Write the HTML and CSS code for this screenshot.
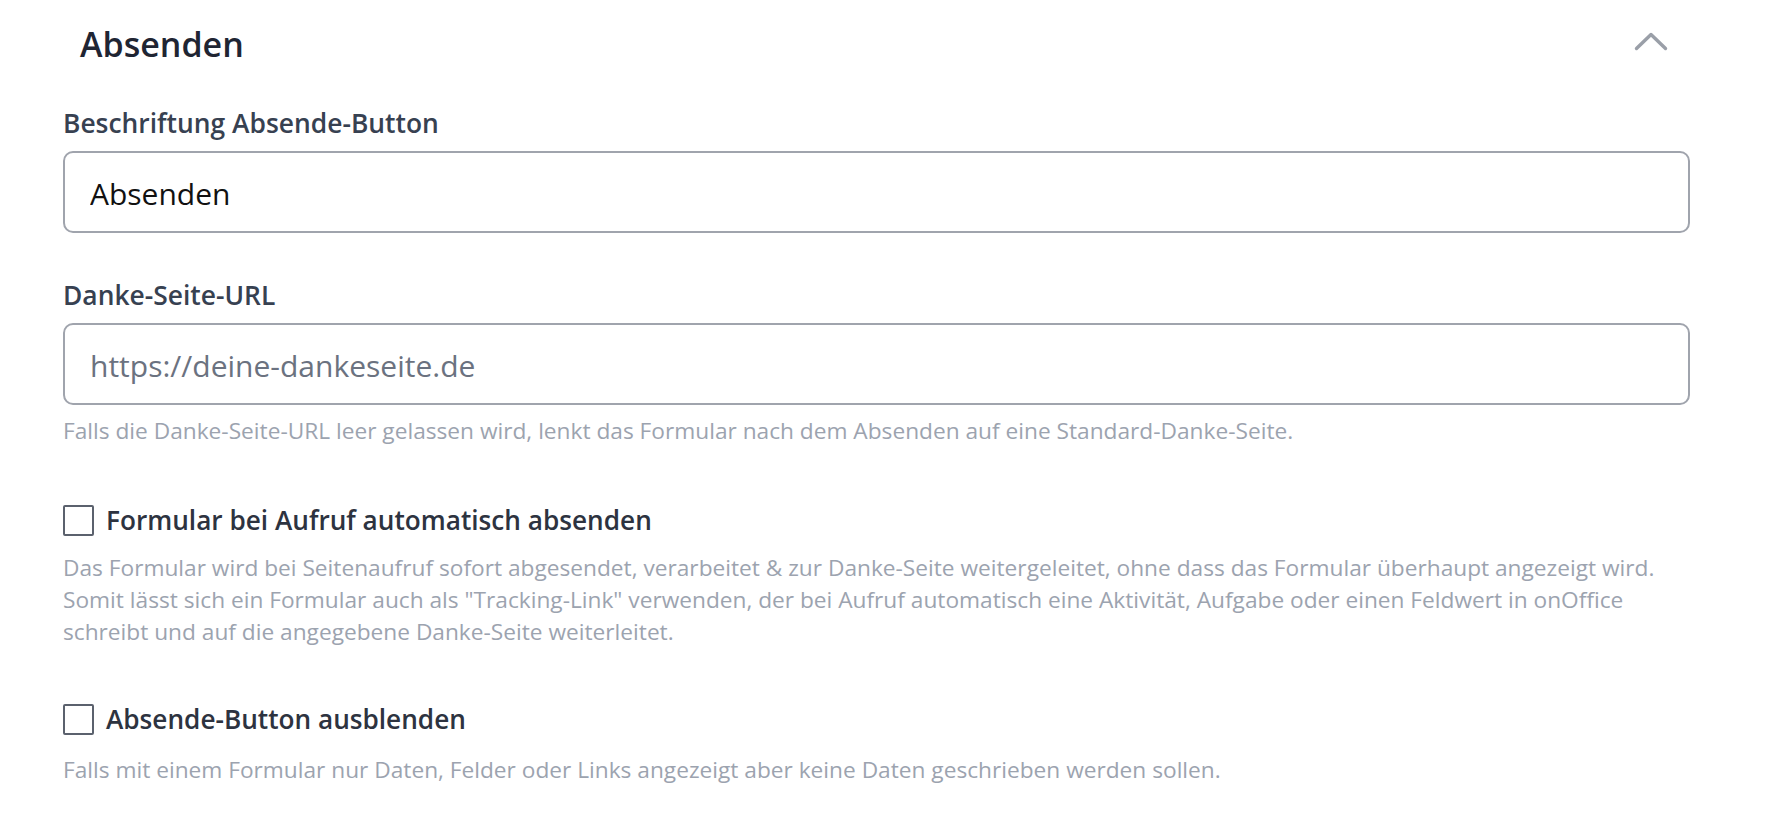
FILE: index.html
```html
<!DOCTYPE html>
<html lang="de">
<head>
<meta charset="utf-8">
<title>Absenden</title>
<link rel="stylesheet" href="styles.css">
</head>
<body>
<section class="panel">
  <header class="panel-head">
    <h2 class="panel-title">Absenden</h2>
    <svg class="chevron" width="36" height="20" viewBox="0 0 36 20" aria-hidden="true"><path d="M3.5 16.5 L18 2.5 L32.5 16.5" fill="none" stroke="#9a9fa8" stroke-width="3.4" stroke-linecap="round" stroke-linejoin="round"/></svg>
  </header>

  <div class="field field-first">
    <label class="field-label" for="btn">Beschriftung Absende-Button</label>
    <input class="text-input" id="btn" type="text" value="Absenden">
  </div>

  <div class="field field-second">
    <label class="field-label" for="url">Danke-Seite-URL</label>
    <input class="text-input" id="url" type="text" placeholder="https://deine-dankeseite.de">
    <p class="hint hint-url">Falls die Danke-Seite-URL leer gelassen wird, lenkt das Formular nach dem Absenden auf eine Standard-Danke-Seite.</p>
  </div>

  <div class="option option-auto">
    <label class="check-row"><input class="check" type="checkbox"><span class="check-label">Formular bei Aufruf automatisch absenden</span></label>
    <p class="hint hint-option">Das Formular wird bei Seitenaufruf sofort abgesendet, verarbeitet &amp; zur Danke-Seite weitergeleitet, ohne dass das Formular überhaupt angezeigt wird. Somit lässt sich ein Formular auch als "Tracking-Link" verwenden, der bei Aufruf automatisch eine Aktivität, Aufgabe oder einen Feldwert in onOffice schreibt und auf die angegebene Danke-Seite weiterleitet.</p>
  </div>

  <div class="option option-hide">
    <label class="check-row"><input class="check" type="checkbox"><span class="check-label">Absende-Button ausblenden</span></label>
    <p class="hint hint-option">Falls mit einem Formular nur Daten, Felder oder Links angezeigt aber keine Daten geschrieben werden sollen.</p>
  </div>
</section>
</body>
</html>
```

FILE: styles.css
```css
* {
  box-sizing: border-box;
}

html, body {
  margin: 0;
  padding: 0;
  background: #ffffff;
}

body {
  font-family: "Open Sans", "Noto Sans", sans-serif;
  color: #374151;
}

.panel {
  width: 1690px;
  padding: 21px 0 0 63px;
}

.panel-head {
  display: flex;
  align-items: center;
  justify-content: space-between;
  height: 46px;
  padding: 0 21px 0 17px;
}

.panel-title {
  margin: 0;
  font-size: 34px;
  line-height: 46px;
  font-weight: 600;
  color: #1f2533;
}

.chevron {
  display: block;
  margin-bottom: 4px;
}

.field {
  display: flex;
  flex-direction: column;
}

.field-first {
  margin-top: 39px;
}

.field-second {
  margin-top: 45px;
}

.field-label {
  font-size: 26.4px;
  line-height: 34px;
  font-weight: 600;
  color: #374151;
  margin-bottom: 11px;
}

.text-input {
  width: 100%;
  height: 82px;
  margin: 0;
  padding: 2px 25px 0 25px;
  border: 2px solid #a0a4ad;
  border-radius: 10px;
  background: #fff;
  font-family: "Open Sans", "Noto Sans", sans-serif;
  font-size: 30px;
  color: #111111;
  outline: none;
}

.text-input::placeholder {
  color: #6b7280;
  opacity: 1;
}

.hint {
  margin: 0;
  font-size: 22.7px;
  line-height: 32px;
  color: #9ca3af;
}

.hint-url {
  margin-top: 10px;
}

.option-auto {
  margin-top: 56px;
}

.option-hide {
  margin-top: 54px;
}

.check-row {
  display: flex;
  align-items: center;
  gap: 12px;
}

.check {
  appearance: none;
  -webkit-appearance: none;
  width: 31px;
  height: 31px;
  margin: 0;
  border: 2px solid #5b616d;
  border-radius: 2px;
  background: #fff;
  flex: none;
}

.check-label {
  font-size: 26.2px;
  line-height: 34px;
  font-weight: 600;
  color: #2d3340;
}

.option-auto .hint-option {
  margin-top: 15px;
}

.option-hide .hint-option {
  margin-top: 18px;
}
```
